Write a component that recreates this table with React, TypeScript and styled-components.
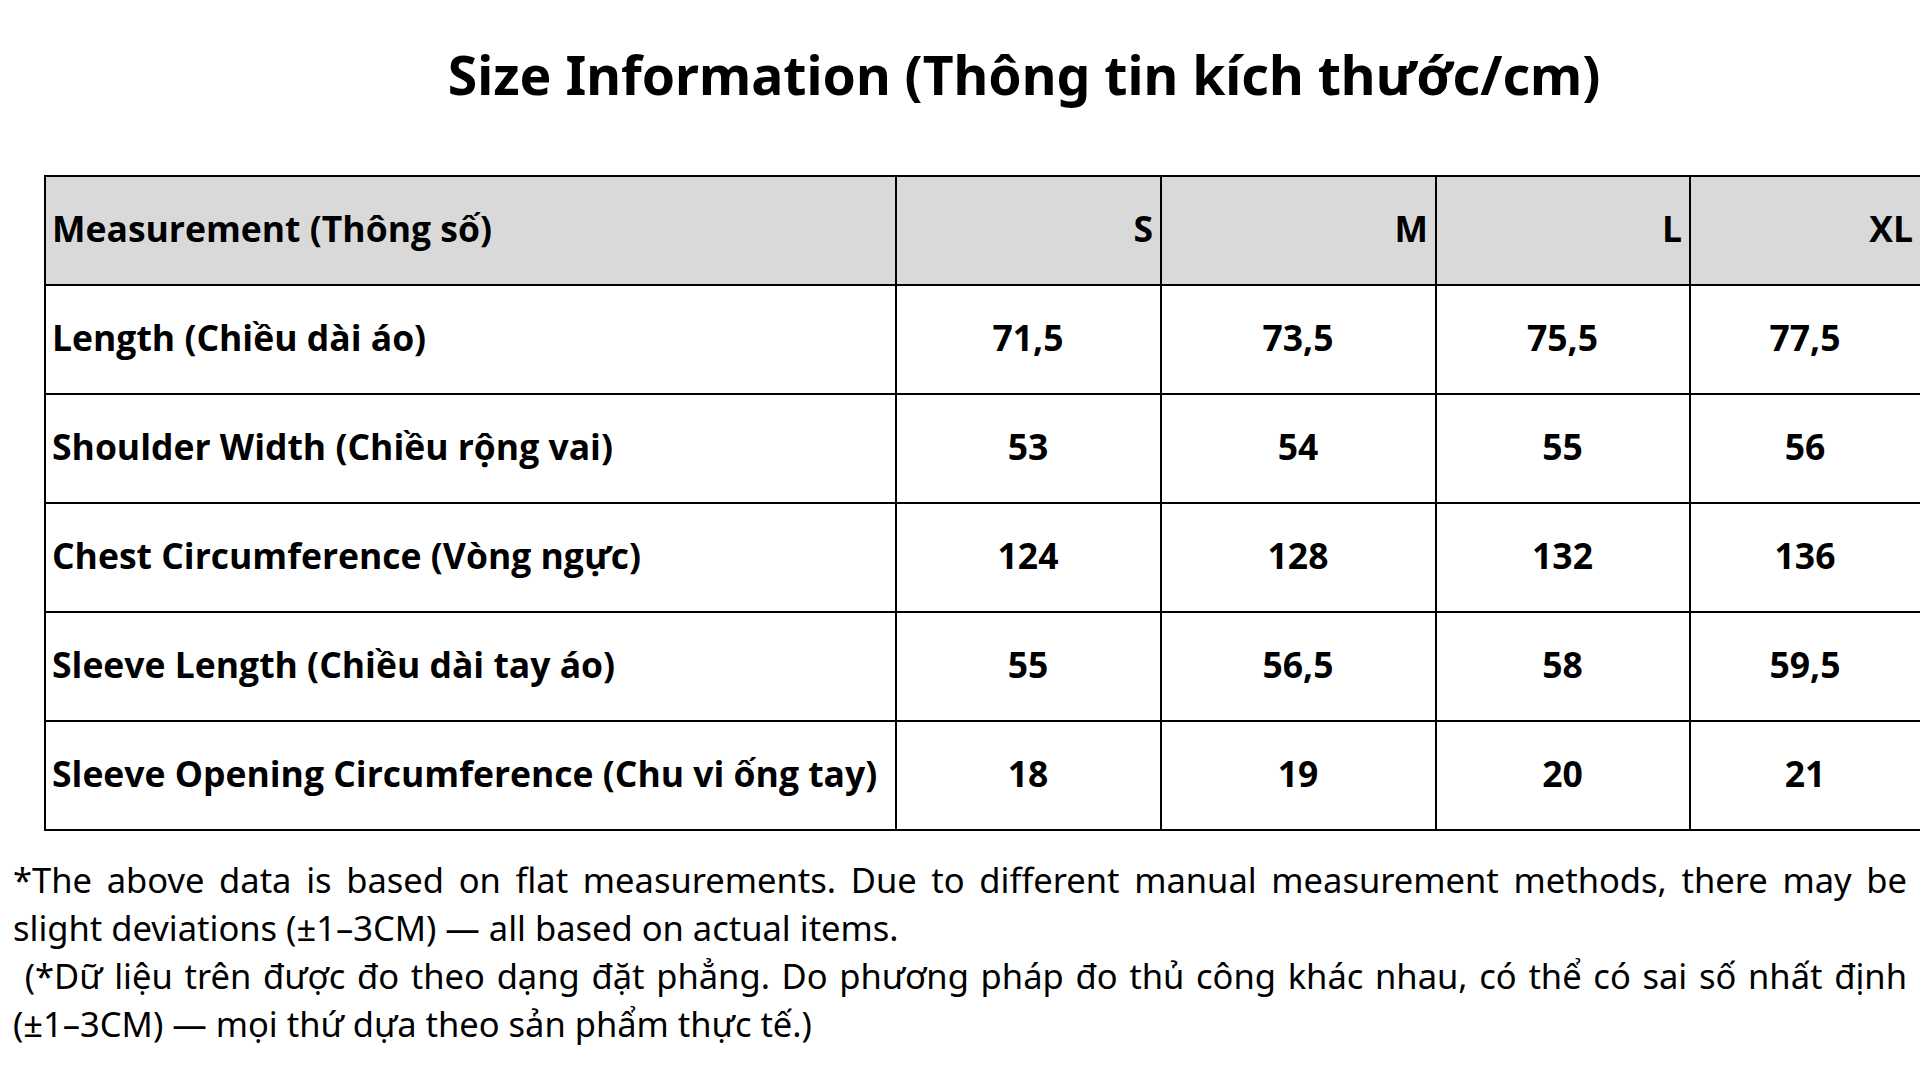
import React from 'react';
import styled, { createGlobalStyle } from 'styled-components';

const GlobalStyle = createGlobalStyle`
    html, body {
        margin: 0;
        padding: 0;
        background: #ffffff;
        overflow: hidden;
    }
`;

interface SizeRow {
    label: string;
    values: string[];
}

const sizes = ['S', 'M', 'L', 'XL'];

const rows: SizeRow[] = [
    { label: 'Length (Chiều dài áo)', values: ['71,5', '73,5', '75,5', '77,5'] },
    { label: 'Shoulder Width (Chiều rộng vai)', values: ['53', '54', '55', '56'] },
    { label: 'Chest Circumference (Vòng ngực)', values: ['124', '128', '132', '136'] },
    { label: 'Sleeve Length (Chiều dài tay áo)', values: ['55', '56,5', '58', '59,5'] },
    { label: 'Sleeve Opening Circumference (Chu vi ống tay)', values: ['18', '19', '20', '21'] },
];

const columnWidths = [851, 265, 275, 254, 231];

const Page = styled.div`
    width: 1920px;
    min-height: 1080px;
    box-sizing: border-box;
    padding-top: 48px;
    color: #000;
`;

const Title = styled.h1`
    margin: 0;
    padding-left: 128px;
    text-align: center;
    font-family: 'Noto Sans', 'Open Sans', sans-serif;
    font-weight: 700;
    font-size: 53.5px;
    line-height: 1;
`;

const Table = styled.table`
    margin: 73px 0 0 44px;
    width: 1876px;
    border-collapse: collapse;
    table-layout: fixed;
    border: 2px solid #000;
    font-family: 'Open Sans', 'Noto Sans', sans-serif;
    font-weight: 700;
    font-size: 35.5px;
`;

const Row = styled.tr<{ $head?: boolean }>`
    height: 109px;
    background: ${({ $head }) => ($head ? '#d9d9d9' : '#ffffff')};
`;

const Cell = styled.td<{ $align: 'left' | 'center' | 'right' }>`
    border: 2px solid #000;
    padding: 0 7px 4px 6px;
    text-align: ${({ $align }) => $align};
    vertical-align: middle;
    white-space: nowrap;
`;

const Note = styled.div`
    margin: 25px 0 0 13px;
    width: 1894px;
    font-family: 'Noto Sans', 'Open Sans', sans-serif;
    font-size: 34.5px;
    line-height: 48px;
    text-align: justify;
`;

const NoteLine = styled.p`
    margin: 0;
`;

const App = () => (
    <Page>
        <GlobalStyle />
        <Title>Size Information (Thông tin kích thước/cm)</Title>
        <Table>
            <colgroup>
                {columnWidths.map((w, i) => (
                    <col key={i} style={{ width: w }} />
                ))}
            </colgroup>
            <thead>
                <Row $head>
                    <Cell as="th" $align="left">
                        Measurement (Thông số)
                    </Cell>
                    {sizes.map((s) => (
                        <Cell as="th" key={s} $align="right">
                            {s}
                        </Cell>
                    ))}
                </Row>
            </thead>
            <tbody>
                {rows.map((r) => (
                    <Row key={r.label}>
                        <Cell $align="left">{r.label}</Cell>
                        {r.values.map((v, i) => (
                            <Cell key={i} $align="center">
                                {v}
                            </Cell>
                        ))}
                    </Row>
                ))}
            </tbody>
        </Table>
        <Note>
            <NoteLine>
                *The above data is based on flat measurements. Due to different manual measurement methods, there may
                be slight deviations (±1–3CM) — all based on actual items.
            </NoteLine>
            <NoteLine>
                {'\u00a0'}(*Dữ liệu trên được đo theo dạng đặt phẳng. Do phương pháp đo thủ công khác nhau, có thể có
                sai số nhất định (±1–3CM) — mọi thứ dựa theo sản phẩm thực tế.)
            </NoteLine>
        </Note>
    </Page>
);

export default App;
